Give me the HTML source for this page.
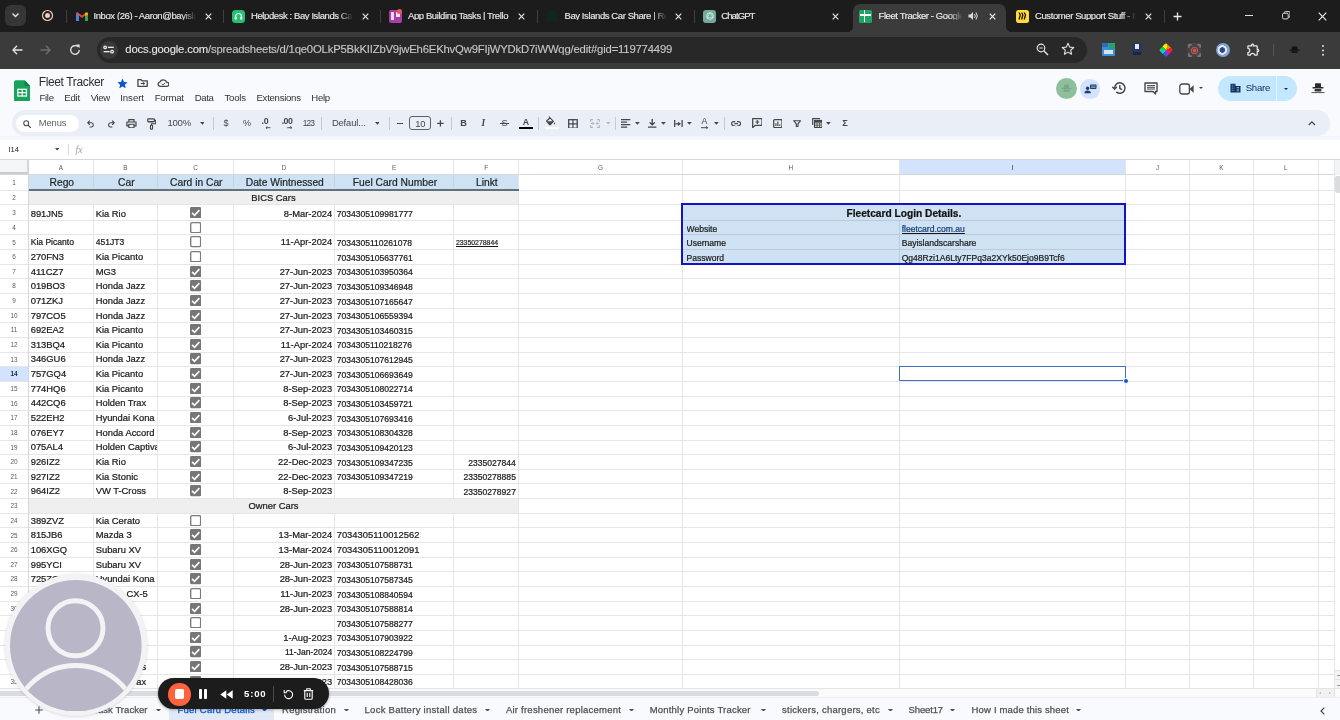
<!DOCTYPE html>
<html><head><meta charset="utf-8"><title>Fleet Tracker - Google Sheets</title>
<style>
*{box-sizing:border-box;margin:0;padding:0}
html,body{width:1340px;height:720px;overflow:hidden;background:#fff;font-family:"Liberation Sans",sans-serif;}
.abs{position:absolute}
#root{position:relative;width:1340px;height:720px;overflow:hidden;background:#fff;transform:translateZ(0);will-change:transform}
.t{position:absolute;white-space:nowrap;line-height:1}
.cell{position:absolute;white-space:nowrap;overflow:hidden;color:#1a1a1a;font-size:9.4px;line-height:1;-webkit-text-stroke:0.22px #1a1a1a}
.vl{position:absolute;width:1px;background:#e6e6e6}
.hl{position:absolute;height:1px;background:#e6e6e6}
.rn{position:absolute;left:0;width:28px;text-align:center;font-size:6.4px;color:#575b5f;line-height:1}
.ch{position:absolute;text-align:center;font-size:6.4px;color:#575b5f;line-height:1;top:165px}
.tab{position:absolute;top:0;height:32px;color:#e3e3e3;font-size:9.6px;letter-spacing:-0.15px}
.mi{position:absolute;top:93.2px;font-size:9.6px;color:#303336;line-height:1;white-space:nowrap}
.st{position:absolute;top:705.2px;font-size:9.5px;color:#4d5156;line-height:1;white-space:nowrap;-webkit-text-stroke:0.25px currentColor}
.sta{position:absolute;top:708.3px;width:0;height:0;border-left:2.6px solid transparent;border-right:2.6px solid transparent;border-top:3px solid #444746}
</style></head><body><div id="root">

<div class="abs" style="left:0;top:0;width:1340px;height:32px;background:#1c1c1c"></div>
<div class="abs" style="left:0;top:32px;width:1340px;height:37px;background:#3b3b3b"></div>
<div class="abs" style="left:853px;top:4px;width:153px;height:28px;background:#3b3b3b;border-radius:7px 7px 0 0"></div>
<div class="abs" style="left:847px;top:26px;width:6px;height:6px;background:radial-gradient(circle at 0 0,#1c1c1c 6px,#3b3b3b 6.5px)"></div>
<div class="abs" style="left:1006px;top:26px;width:6px;height:6px;background:radial-gradient(circle at 100% 0,#1c1c1c 6px,#3b3b3b 6.5px)"></div>
<div class="abs" style="left:5px;top:5px;width:21px;height:21px;border-radius:6px;background:#363636"></div>
<svg class="abs" style="left:11px;top:12px" width="9" height="7" viewBox="0 0 9 7"><path d="M1.5 1.5 L4.5 4.5 L7.5 1.5" fill="none" stroke="#e3e3e3" stroke-width="1.4"/></svg>
<svg class="abs" style="left:41px;top:9px" width="13" height="13" viewBox="0 0 13 13"><circle cx="6.5" cy="6.5" r="5" fill="none" stroke="#f2c9c2" stroke-width="1.2"/><circle cx="6.5" cy="6.5" r="2.5" fill="#f2c9c2"/></svg>
<div class="abs" style="left:65.5px;top:9.5px;width:1.6px;height:13px;background:#414141"></div>
<svg class="abs" style="left:75.5px;top:11.8px" width="12" height="9" viewBox="0 0 13 10"><path d="M0 1 L0 10 L3 10 L3 4 L6.5 6.7 L10 4 L10 10 L13 10 L13 1 L11.8 0 L6.5 4 L1.2 0 Z" fill="#ea4335"/><path d="M0 1 L0 10 L3 10 L3 3.3 Z" fill="#4285f4"/><path d="M13 1 L13 10 L10 10 L10 3.3 Z" fill="#34a853"/><path d="M10 0.9 L13 0.9 L13 3 L10 4.5Z" fill="#fbbc04"/></svg>
<div class="t" style="left:93.5px;top:10.7px;width:102px;overflow:hidden;font-size:9.5px;color:#e8e8e8;letter-spacing:-0.410px;-webkit-text-stroke:0.15px #e8e8e8;-webkit-mask-image:linear-gradient(90deg,#000 88px,transparent 102px)">Inbox (26) - Aaron@bayislandscarshare</div>
<svg class="abs" style="left:205.0px;top:12.5px" width="7" height="7" viewBox="0 0 7 7"><path d="M0.7 0.7 L6.3 6.3 M6.3 0.7 L0.7 6.3" stroke="#e3e3e3" stroke-width="1.2" fill="none"/></svg>
<div class="abs" style="left:222.5px;top:9.5px;width:1.6px;height:13px;background:#414141"></div>
<div class="abs" style="left:232px;top:9.5px;width:13px;height:13px;border-radius:3.5px;background:#25c16f"></div>
<svg class="abs" style="left:234px;top:11.5px" width="9" height="9" viewBox="0 0 9 9"><path d="M1.5 6 V4.5 A3 3 0 0 1 7.5 4.5 V6" fill="none" stroke="#fff" stroke-width="1.2"/><rect x="0.8" y="4.8" width="2" height="2.8" rx="0.6" fill="#fff"/><rect x="6.2" y="4.8" width="2" height="2.8" rx="0.6" fill="#fff"/></svg>
<div class="t" style="left:251px;top:10.7px;width:102px;overflow:hidden;font-size:9.5px;color:#e8e8e8;letter-spacing:-0.410px;-webkit-text-stroke:0.15px #e8e8e8;-webkit-mask-image:linear-gradient(90deg,#000 88px,transparent 102px)">Helpdesk : Bay Islands Car Share</div>
<svg class="abs" style="left:361.5px;top:12.5px" width="7" height="7" viewBox="0 0 7 7"><path d="M0.7 0.7 L6.3 6.3 M6.3 0.7 L0.7 6.3" stroke="#e3e3e3" stroke-width="1.2" fill="none"/></svg>
<div class="abs" style="left:379.5px;top:9.5px;width:1.6px;height:13px;background:#414141"></div>
<div class="abs" style="left:389px;top:9.5px;width:13px;height:13px;border-radius:2px;background:#a83ea8"></div>
<div class="abs" style="left:391px;top:11.5px;width:3px;height:8px;background:#f3d9f3;border-radius:0.5px"></div>
<div class="abs" style="left:395.5px;top:11.5px;width:4px;height:5.5px;background:#f3d9f3;border-radius:0.5px"></div>
<div class="abs" style="left:396.5px;top:9px;width:5px;height:5px;border-radius:50%;background:#ee5a4a"></div>
<div class="t" style="left:408px;top:10.7px;width:116px;overflow:hidden;font-size:9.5px;color:#e8e8e8;letter-spacing:-0.410px;-webkit-text-stroke:0.15px #e8e8e8;-webkit-mask-image:linear-gradient(90deg,#000 102px,transparent 116px)">App Building Tasks | Trello</div>
<svg class="abs" style="left:518.0px;top:12.5px" width="7" height="7" viewBox="0 0 7 7"><path d="M0.7 0.7 L6.3 6.3 M6.3 0.7 L0.7 6.3" stroke="#e3e3e3" stroke-width="1.2" fill="none"/></svg>
<div class="abs" style="left:536.5px;top:9.5px;width:1.6px;height:13px;background:#414141"></div>
<svg class="abs" style="left:546px;top:10px" width="12" height="12" viewBox="0 0 12 12"><rect x="0" y="3" width="12" height="8" rx="1.5" fill="#14241f"/><rect x="2" y="0.5" width="8" height="4" rx="1" fill="#14241f"/></svg>
<div class="t" style="left:564.5px;top:10.7px;width:102px;overflow:hidden;font-size:9.5px;color:#e8e8e8;letter-spacing:-0.410px;-webkit-text-stroke:0.15px #e8e8e8;-webkit-mask-image:linear-gradient(90deg,#000 88px,transparent 102px)">Bay Islands Car Share | Rental</div>
<svg class="abs" style="left:675.0px;top:12.5px" width="7" height="7" viewBox="0 0 7 7"><path d="M0.7 0.7 L6.3 6.3 M6.3 0.7 L0.7 6.3" stroke="#e3e3e3" stroke-width="1.2" fill="none"/></svg>
<div class="abs" style="left:693.5px;top:9.5px;width:1.6px;height:13px;background:#414141"></div>
<div class="abs" style="left:703px;top:9.5px;width:13px;height:13px;border-radius:3px;background:#74aa9c"></div>
<svg class="abs" style="left:704.5px;top:11px" width="10" height="10" viewBox="0 0 10 10"><circle cx="5" cy="5" r="3.3" fill="none" stroke="#d5ebe5" stroke-width="1"/><path d="M5 1.7 L7.8 6.6 L2.2 6.6 Z" fill="none" stroke="#d5ebe5" stroke-width="0.7"/></svg>
<div class="t" style="left:721.2px;top:10.7px;width:102px;overflow:hidden;font-size:9.5px;color:#e8e8e8;letter-spacing:-0.899px;-webkit-text-stroke:0.15px #e8e8e8;-webkit-mask-image:linear-gradient(90deg,#000 88px,transparent 102px)">ChatGPT</div>
<svg class="abs" style="left:832.0px;top:12.5px" width="7" height="7" viewBox="0 0 7 7"><path d="M0.7 0.7 L6.3 6.3 M6.3 0.7 L0.7 6.3" stroke="#e3e3e3" stroke-width="1.2" fill="none"/></svg>
<div class="abs" style="left:859px;top:9.5px;width:13px;height:13px;border-radius:1.5px;background:#1fa463"></div>
<div class="abs" style="left:863.5px;top:10px;width:1.6px;height:12px;background:#fff"></div>
<div class="abs" style="left:860px;top:14px;width:11px;height:1.6px;background:#fff"></div>
<div class="t" style="left:878.5px;top:10.7px;width:84px;overflow:hidden;font-size:9.5px;color:#ececec;letter-spacing:-0.410px;-webkit-text-stroke:0.15px #ececec;-webkit-mask-image:linear-gradient(90deg,#000 70px,transparent 84px)">Fleet Tracker - Google Sheets</div>
<svg class="abs" style="left:968px;top:11px" width="11" height="10" viewBox="0 0 11 10"><path d="M0.5 3.5 H2.5 L5 1 V9 L2.5 6.5 H0.5 Z" fill="#dcdcdc"/><path d="M6.5 3 Q8 5 6.5 7 M8 1.5 Q10.6 5 8 8.5" fill="none" stroke="#dcdcdc" stroke-width="1"/></svg>
<svg class="abs" style="left:988.5px;top:12.5px" width="7" height="7" viewBox="0 0 7 7"><path d="M0.7 0.7 L6.3 6.3 M6.3 0.7 L0.7 6.3" stroke="#f0f0f0" stroke-width="1.2" fill="none"/></svg>
<div class="abs" style="left:1016px;top:9.5px;width:13px;height:13px;border-radius:2.5px;background:#ffdd33"></div>
<svg class="abs" style="left:1018px;top:12px" width="9" height="8" viewBox="0 0 9 8"><path d="M1 0.5 L2.3 3 L1 7.5 M3.6 0.5 L4.9 3 L3.6 7.5 M6.2 0.5 L7.5 3 L6.2 7.5" fill="none" stroke="#111" stroke-width="1.3"/></svg>
<div class="t" style="left:1035px;top:10.7px;width:101px;overflow:hidden;font-size:9.5px;color:#e8e8e8;letter-spacing:-0.410px;-webkit-text-stroke:0.15px #e8e8e8;-webkit-mask-image:linear-gradient(90deg,#000 87px,transparent 101px)">Customer Support Stuff - Miro</div>
<svg class="abs" style="left:1145.0px;top:12.5px" width="7" height="7" viewBox="0 0 7 7"><path d="M0.7 0.7 L6.3 6.3 M6.3 0.7 L0.7 6.3" stroke="#e3e3e3" stroke-width="1.2" fill="none"/></svg>
<div class="abs" style="left:1163.5px;top:9.5px;width:1.6px;height:13px;background:#414141"></div>
<svg class="abs" style="left:1172.5px;top:11.5px" width="9" height="9" viewBox="0 0 9 9"><path d="M4.5 0.5 V8.5 M0.5 4.5 H8.5" stroke="#e8e8e8" stroke-width="1.3"/></svg>
<div class="abs" style="left:1245px;top:15px;width:8px;height:1px;background:#e0e0e0"></div>
<svg class="abs" style="left:1281.8px;top:11.2px" width="8.6" height="8.6" viewBox="0 0 10 10"><rect x="0.6" y="2.6" width="6.6" height="6.6" rx="1.4" fill="none" stroke="#e0e0e0" stroke-width="1.1"/><path d="M2.8 2.6 V1.8 Q2.8 0.7 3.9 0.7 H8.2 Q9.3 0.7 9.3 1.8 V6.1 Q9.3 7.2 8.2 7.2 H7.2" fill="none" stroke="#e0e0e0" stroke-width="1.1"/></svg>
<svg class="abs" style="left:1318px;top:11.5px" width="9" height="9" viewBox="0 0 9 9"><path d="M0.7 0.7 L8.3 8.3 M8.3 0.7 L0.7 8.3" stroke="#f0f0f0" stroke-width="1.1"/></svg>
<svg class="abs" style="left:12px;top:45px" width="11" height="10" viewBox="0 0 11 10"><path d="M5 0.8 L1 5 L5 9.2 M1 5 H10.5" fill="none" stroke="#e3e3e3" stroke-width="1.3"/></svg>
<svg class="abs" style="left:40px;top:45px" width="11" height="10" viewBox="0 0 11 10"><path d="M6 0.8 L10 5 L6 9.2 M10 5 H0.5" fill="none" stroke="#6f6f6f" stroke-width="1.3"/></svg>
<svg class="abs" style="left:69px;top:44px" width="12" height="12" viewBox="0 0 12 12"><path d="M10.3 6 A4.3 4.3 0 1 1 8.9 2.8" fill="none" stroke="#e3e3e3" stroke-width="1.3"/><path d="M7 0.6 H10.6 V4.2 Z" fill="#e3e3e3"/></svg>
<div class="abs" style="left:97px;top:37px;width:990px;height:25.7px;border-radius:13px;background:#282828"></div>
<div class="abs" style="left:100px;top:41px;width:18px;height:18px;border-radius:9px;background:#3a3a3a"></div>
<svg class="abs" style="left:103.4px;top:45.4px" width="11.6" height="9" viewBox="0 0 14 10"><circle cx="2.6" cy="2.4" r="1.6" fill="none" stroke="#ededed" stroke-width="1.5"/><path d="M6 2.4 H13" stroke="#ededed" stroke-width="1.6"/><circle cx="11" cy="7.6" r="1.6" fill="none" stroke="#ededed" stroke-width="1.5"/><path d="M0.8 7.6 H8" stroke="#ededed" stroke-width="1.6"/></svg>
<div class="t" style="left:125.3px;top:44.1px;font-size:11.3px;color:#c7c7c7;-webkit-text-stroke:0.12px #c7c7c7;letter-spacing:-0.183px"><span style="color:#f1f1f1">docs.google.com</span>/spreadsheets/d/1qe0OLkP5BkKIIZbV9jwEh6EKhvQw9FIjWYDkD7iWWqg/edit#gid=119774499</div>
<svg class="abs" style="left:1036px;top:43px" width="13" height="13" viewBox="0 0 13 13"><circle cx="5" cy="5" r="3.8" fill="none" stroke="#e3e3e3" stroke-width="1.2"/><path d="M7.8 7.8 L12 12" stroke="#e3e3e3" stroke-width="1.4"/><path d="M3.2 5 H6.8" stroke="#e3e3e3" stroke-width="1"/></svg>
<svg class="abs" style="left:1061px;top:42px" width="14" height="14" viewBox="0 0 14 14"><path d="M7 1.3 L8.7 5.1 L12.8 5.5 L9.7 8.2 L10.6 12.3 L7 10.1 L3.4 12.3 L4.3 8.2 L1.2 5.5 L5.3 5.1 Z" fill="none" stroke="#e3e3e3" stroke-width="1.1" stroke-linejoin="round"/></svg>
<div class="abs" style="left:1102px;top:43px;width:13px;height:13px;background:#3d8fd1;border-radius:1px"></div><div class="abs" style="left:1102px;top:43px;width:6px;height:4px;background:#2a6fb5"></div><div class="abs" style="left:1109px;top:43px;width:6px;height:6px;background:#23a36a"></div><div class="abs" style="left:1104px;top:49.5px;width:9px;height:4px;background:#cfe4f5"></div>
<div class="abs" style="left:1132px;top:43px;width:10px;height:9px;background:#26375f;border-radius:1.5px"></div><div class="abs" style="left:1135px;top:44px;width:4px;height:5px;background:#dfe8f5"></div><div class="abs" style="left:1133px;top:52px;width:8px;height:3px;background:#1d2540"></div>
<div class="abs" style="left:1161.4px;top:45px;width:10px;height:10px;transform:rotate(45deg);border-radius:1.5px;background:conic-gradient(from 20deg,#e22 0 14%,#f0c 14% 28%,#26d 28% 42%,#1cc 42% 56%,#2c3 56% 72%,#fe0 72% 86%,#f80 86% 100%)"></div>
<div class="abs" style="left:1187px;top:43px;width:14px;height:14px;border-radius:2px;background:#444"></div><svg class="abs" style="left:1187.5px;top:43.5px" width="13" height="13" viewBox="0 0 14 14"><path d="M1 4 V1 H4 M10 1 H13 V4 M13 10 V13 H10 M4 13 H1 V10" fill="none" stroke="#8a8a8a" stroke-width="1.4"/><circle cx="7" cy="7" r="3.3" fill="none" stroke="#c4574d" stroke-width="1.2"/><circle cx="7" cy="7" r="1.8" fill="#d9564a"/></svg>
<div class="abs" style="left:1216px;top:43px;width:14px;height:14px;border-radius:50%;background:radial-gradient(circle at 45% 50%,#2f4a7a 0 2.5px,#dfe9f7 3px 4.5px,#7fa2d6 5px 7px)"></div>
<svg class="abs" style="left:1245.6px;top:42px" width="15" height="15" viewBox="0 0 24 24"><path d="M10.5 4.500c.280 0 .5.220.5.500v2h6v6h2c.280 0 .5.220.5.500s-.220.500-.5.500h-2v6h-2.120c-.680-1.750-2.390-3-4.380-3s-3.700 1.250-4.380 3H4v-2.120c1.750-.680 3-2.390 3-4.380 0-1.990-1.240-3.700-2.990-4.380L4 7h6V5c0-.280.220-.5.500-.5m0-2C9.120 2.500 8 3.620 8 5H4c-1.100 0-1.990.9-1.990 2v3.800h.290c1.490 0 2.700 1.210 2.700 2.700s-1.210 2.700-2.700 2.700H2V20c0 1.100.9 2 2 2h3.800v-.3c0-1.490 1.210-2.700 2.700-2.700s2.700 1.210 2.700 2.700v.3H17c1.100 0 2-.9 2-2v-4c1.380 0 2.500-1.120 2.500-2.500S20.380 11 19 11V7c0-1.100-.9-2-2-2h-4c0-1.380-1.120-2.500-2.500-2.500z" fill="#eaeaea"/></svg>
<div class="abs" style="left:1272.5px;top:44px;width:1px;height:12px;background:#555"></div>
<svg class="abs" style="left:1289px;top:46px" width="11.2" height="7.6" viewBox="0 0 12 10" preserveAspectRatio="none"><rect x="3" y="0.5" width="6" height="4.5" rx="0.8" fill="#111"/><rect x="0.5" y="4.5" width="11" height="1.6" rx="0.5" fill="#111"/><rect x="2.5" y="6.5" width="7" height="2.6" rx="1" fill="#161616"/></svg>
<div class="abs" style="left:1322px;top:44.5px;width:2px;height:2px;border-radius:50%;background:#e3e3e3;box-shadow:0 4.4px 0 #e3e3e3,0 8.8px 0 #e3e3e3"></div>
<div class="abs" style="left:0;top:69px;width:1340px;height:67px;background:#f8fafd"></div><div class="abs" style="left:0;top:135.8px;width:1340px;height:7.5px;background:linear-gradient(#f1f4fa,#fff)"></div>
<svg class="abs" style="left:13.5px;top:79.5px" width="16.3" height="21.5" viewBox="0 0 17 22"><path d="M2 0 H11 L17 6 V20 Q17 22 15 22 H2 Q0 22 0 20 V2 Q0 0 2 0 Z" fill="#17a35c"/><path d="M11 0 L17 6 H12.5 Q11 6 11 4.5 Z" fill="#0d7f45"/><rect x="4" y="9.5" width="9" height="7" fill="none" stroke="#fff" stroke-width="1.3"/><path d="M4 13 H13 M8.5 9.5 V16.5" stroke="#fff" stroke-width="1.2"/></svg>
<div class="t" style="left:38.7px;top:76px;font-size:12px;color:#2a2d31;letter-spacing:-0.363px">Fleet Tracker</div>
<svg class="abs" style="left:116.5px;top:77.5px" width="11" height="11" viewBox="0 0 11 11"><path d="M5.5 0.6 L7 4 L10.6 4.3 L7.9 6.7 L8.7 10.3 L5.5 8.4 L2.3 10.3 L3.1 6.7 L0.4 4.3 L4 4 Z" fill="#0b57d0"/></svg>
<svg class="abs" style="left:136.8px;top:79.2px" width="11.2" height="8" viewBox="0 0 12 9" preserveAspectRatio="none"><path d="M1 0.8 H4.4 L5.5 2 H11 V8.2 H1 Z" fill="none" stroke="#444746" stroke-width="1.4" stroke-linejoin="round"/><path d="M4 5.1 H8 M6.6 3.7 L8 5.1 L6.6 6.5" fill="none" stroke="#444746" stroke-width="1.1"/></svg>
<svg class="abs" style="left:156.6px;top:79px" width="12.6" height="8.2" viewBox="0 0 14 10" preserveAspectRatio="none"><path d="M3.6 9 A2.8 2.8 0 0 1 3.4 3.5 A3.8 3.8 0 0 1 10.6 3.8 A2.6 2.6 0 0 1 10.6 9 Z" fill="none" stroke="#444746" stroke-width="1.5"/><path d="M5.2 6 L6.6 7.3 L9 4.8" fill="none" stroke="#444746" stroke-width="1.1"/></svg>
<div class="mi" style="left:39.5px;letter-spacing:-0.317px">File</div>
<div class="mi" style="left:64.2px;letter-spacing:-0.186px">Edit</div>
<div class="mi" style="left:90.7px;letter-spacing:-0.409px">View</div>
<div class="mi" style="left:120.2px;letter-spacing:-0.035px">Insert</div>
<div class="mi" style="left:154.7px;letter-spacing:-0.234px">Format</div>
<div class="mi" style="left:194.7px;letter-spacing:-0.370px">Data</div>
<div class="mi" style="left:224.5px;letter-spacing:-0.242px">Tools</div>
<div class="mi" style="left:256.5px;letter-spacing:-0.276px">Extensions</div>
<div class="mi" style="left:311.2px;letter-spacing:-0.236px">Help</div>
<div class="abs" style="left:1056px;top:78px;width:21px;height:21px;border-radius:50%;background:#8dbf9b"></div>
<svg class="abs" style="left:1061px;top:84px" width="11" height="9" viewBox="0 0 11 9"><rect x="3" y="0.5" width="5" height="3.6" rx="0.8" fill="#7aa787"/><rect x="0.8" y="3.8" width="9.4" height="1.3" fill="#7aa787"/><rect x="2.5" y="5.6" width="6" height="2.4" rx="1" fill="#7aa787"/></svg>
<div class="abs" style="left:1080px;top:79px;width:19.5px;height:19.5px;border-radius:50%;background:#d3e3fd"></div>
<svg class="abs" style="left:1084px;top:83.5px" width="13" height="10" viewBox="0 0 13 10"><circle cx="3.6" cy="4.2" r="1.7" fill="#1f3a6e"/><path d="M0.4 9.3 Q0.4 6.6 3.6 6.6 Q6.8 6.6 6.8 9.3 Z" fill="#1f3a6e"/><rect x="6" y="0.5" width="6.5" height="4.4" rx="0.8" fill="#1f3a6e"/><path d="M7 2 H11.5 M7 3.4 H11.5" stroke="#d3e3fd" stroke-width="0.6"/></svg>
<svg class="abs" style="left:1112px;top:81px" width="15" height="14" viewBox="0 0 15 14"><path d="M2.6 7 A5.2 5.2 0 1 1 4.3 10.9" fill="none" stroke="#444746" stroke-width="1.5"/><path d="M0.4 5.8 L2.6 8.2 L4.8 5.8" fill="none" stroke="#444746" stroke-width="1.4"/><path d="M7.8 4 V7.3 L10 8.7" fill="none" stroke="#444746" stroke-width="1.4"/></svg>
<svg class="abs" style="left:1144px;top:82px" width="14" height="13" viewBox="0 0 14 13"><path d="M1 1 H13 V9.5 H11.5 V12 L9 9.5 H1 Z" fill="none" stroke="#444746" stroke-width="1.4" stroke-linejoin="round"/><path d="M3 3.6 H11 M3 5.3 H11 M3 7 H11" stroke="#444746" stroke-width="1"/></svg>
<svg class="abs" style="left:1178.5px;top:82.5px" width="16" height="12" viewBox="0 0 16 12"><rect x="0.8" y="1" width="9.6" height="10" rx="2.2" fill="none" stroke="#444746" stroke-width="1.3"/><path d="M10.4 6 L14.6 2.2 V9.8 Z" fill="#444746"/></svg>
<div class="abs" style="left:1198.5px;top:87px;width:0;height:0;border-left:2.3px solid transparent;border-right:2.3px solid transparent;border-top:2.6px solid #444746"></div>
<div class="abs" style="left:1218px;top:75.5px;width:79px;height:25.5px;border-radius:13px;background:#c2e7ff"></div>
<div class="abs" style="left:1275.5px;top:75.5px;width:1px;height:25.5px;background:#e5f3fd"></div>
<svg class="abs" style="left:1229.5px;top:83px" width="11" height="10" viewBox="0 0 11 10"><path d="M0.5 9.5 V0.8 H5.5 V3 H10.5 V9.5 Z" fill="#10305e"/><path d="M6.7 4.5 H9 M6.7 6.2 H9 M6.7 7.9 H9" stroke="#c2e7ff" stroke-width="0.7"/><path d="M1.8 2.2 H2.8 M1.8 4 H2.8 M1.8 5.8 H2.8 M1.8 7.6 H2.8 M3.6 2.2 H4.4 M3.6 4 H4.4 M3.6 5.8 H4.4 M3.6 7.6 H4.4" stroke="#c2e7ff" stroke-width="0.6"/></svg>
<div class="t" style="left:1245.7px;top:83.3px;font-size:9.6px;color:#0f2a5c;letter-spacing:-0.224px">Share</div>
<div class="abs" style="left:1284.3px;top:87.5px;width:0;height:0;border-left:2.4px solid transparent;border-right:2.4px solid transparent;border-top:2.8px solid #0f2a5c"></div>
<svg class="abs" style="left:1311px;top:83px" width="14" height="11" viewBox="0 0 14 11"><rect x="4" y="0.3" width="6" height="4.2" rx="0.8" fill="#2a2a2a"/><rect x="1.6" y="4" width="10.8" height="1.5" fill="#2a2a2a"/><rect x="3.5" y="6" width="7" height="2.6" rx="1" fill="#333"/><path d="M0.5 9.6 H13.5" stroke="#2a2a2a" stroke-width="0.8"/></svg>
<div class="abs" style="left:11.5px;top:110.4px;width:1318.5px;height:25.4px;border-radius:12.7px;background:#eaeff7"></div>
<div class="abs" style="left:15.8px;top:114.5px;width:63.4px;height:17.2px;border-radius:8.6px;background:#fff"></div>
<svg class="abs" style="left:22.8px;top:119.5px" width="8.20" height="8.30" viewBox="0 0 10 10" preserveAspectRatio="none"><circle cx="3.9" cy="3.9" r="3" fill="none" stroke="#444746" stroke-width="1.3"/><path d="M6.1 6.1 L9.5 9.5" stroke="#444746" stroke-width="1.4"/></svg>
<div class="t" style="left:38.8px;top:118.2px;font-size:9.4px;color:#5e6063;letter-spacing:-0.103px">Menus</div>
<svg class="abs" style="left:86.8px;top:120px" width="7.80" height="7.50" viewBox="0 0 10 9" preserveAspectRatio="none"><path d="M3.6 0.7 L1 3.3 L3.6 5.9 M1 3.3 H6 A2.6 2.6 0 0 1 6 8.4 H3.4" fill="none" stroke="#444746" stroke-width="1.35"/></svg>
<svg class="abs" style="left:106.6px;top:120px" width="8.10" height="7.50" viewBox="0 0 10 9" preserveAspectRatio="none"><path d="M6.4 0.7 L9 3.3 L6.4 5.9 M9 3.3 H4 A2.6 2.6 0 0 0 4 8.4 H6.6" fill="none" stroke="#444746" stroke-width="1.35"/></svg>
<svg class="abs" style="left:126.1px;top:119px" width="10.90" height="9.40" viewBox="0 0 12 11" preserveAspectRatio="none"><path d="M3.2 3.3 V0.8 H8.8 V3.3 M3.2 8 H1 V3.5 H11 V8 H8.8 M3.2 6.2 H8.8 V10.2 H3.2 Z" fill="none" stroke="#444746" stroke-width="1.35"/></svg>
<svg class="abs" style="left:146.7px;top:117.7px" width="9.40" height="11.90" viewBox="0 0 10 12" preserveAspectRatio="none"><rect x="0.8" y="0.8" width="7" height="3" rx="0.7" fill="none" stroke="#444746" stroke-width="1.3"/><path d="M7.8 2.3 H9.2 V5.8 H4.8 V7.4" fill="none" stroke="#444746" stroke-width="1.2"/><rect x="3.7" y="7.3" width="2.2" height="3.9" rx="0.6" fill="none" stroke="#444746" stroke-width="1.2"/></svg>
<div class="t" style="left:167.5px;top:118.2px;font-size:9.6px;color:#444746;letter-spacing:-0.288px;">100%</div>
<svg class="abs" style="left:199.60px;top:122.05px" width="4.8" height="2.7" viewBox="0 0 10 5.6" preserveAspectRatio="none"><path d="M0 0 H10 L5 5.6 Z" fill="#444746"/></svg>
<div class="abs" style="left:212.7px;top:116.7px;width:1px;height:13.5px;background:#c7c9cc"></div>
<div class="t" style="left:223.4px;top:119.2px;font-size:9px;color:#444746;letter-spacing:-0.006px;">$</div>
<div class="t" style="left:242.9px;top:119.2px;font-size:9px;color:#444746;letter-spacing:-0.902px;">%</div>
<div class="t" style="left:261.4px;top:117.3px;font-size:8.8px;color:#444746;letter-spacing:-0.120px;font-weight:bold;">.0</div>
<svg class="abs" style="left:265.3px;top:125.6px" width="5.70" height="3.40" viewBox="0 0 6 4" preserveAspectRatio="none"><path d="M5.8 2 H1 M2.6 0.4 L1 2 L2.6 3.6" fill="none" stroke="#444746" stroke-width="1"/></svg>
<div class="t" style="left:281.7px;top:117.3px;font-size:8.8px;color:#444746;letter-spacing:-0.511px;font-weight:bold;">.00</div>
<svg class="abs" style="left:287.2px;top:125.6px" width="5.80" height="3.40" viewBox="0 0 6 4" preserveAspectRatio="none"><path d="M0.2 2 H5 M3.4 0.4 L5 2 L3.4 3.6" fill="none" stroke="#444746" stroke-width="1"/></svg>
<div class="t" style="left:302.8px;top:119px;font-size:8.4px;color:#444746;letter-spacing:-0.872px;">123</div>
<div class="abs" style="left:321.3px;top:116.7px;width:1px;height:13.5px;background:#c7c9cc"></div>
<div class="t" style="left:331.9px;top:118.3px;font-size:9.4px;color:#444746;letter-spacing:-0.134px;">Defaul...</div>
<svg class="abs" style="left:374.70px;top:122.05px" width="4.8" height="2.7" viewBox="0 0 10 5.6" preserveAspectRatio="none"><path d="M0 0 H10 L5 5.6 Z" fill="#444746"/></svg>
<div class="abs" style="left:388.5px;top:116.7px;width:1px;height:13.5px;background:#c7c9cc"></div>
<div class="abs" style="left:396.9px;top:122.7px;width:5.8px;height:1.3px;background:#444746"></div>
<div class="abs" style="left:409.3px;top:115.9px;width:21.8px;height:14.6px;border:1px solid #5f6368;border-radius:3px"></div>
<div class="t" style="left:409.3px;width:21.8px;text-align:center;top:118.9px;font-size:9.4px;color:#444746;letter-spacing:-0.2px">10</div>
<svg class="abs" style="left:436.8px;top:120px" width="6.80" height="6.80" viewBox="0 0 7 7" preserveAspectRatio="none"><path d="M3.5 0.2 V6.8 M0.2 3.5 H6.8" stroke="#444746" stroke-width="1.3"/></svg>
<div class="abs" style="left:450.7px;top:116.7px;width:1px;height:13.5px;background:#c7c9cc"></div>
<div class="t" style="left:460.2px;top:119px;font-size:9.2px;color:#444746;letter-spacing:-0.444px;font-weight:bold;">B</div>
<div class="t" style="left:481.6px;top:119px;font-size:9.4px;color:#444746;font-style:italic;font-weight:bold;font-family:'Liberation Serif',serif">I</div>
<div class="t" style="left:501.4px;top:119px;font-size:9.2px;color:#444746">S</div>
<div class="abs" style="left:499.7px;top:123px;width:9.3px;height:1.2px;background:#444746"></div>
<div class="t" style="left:522.8px;top:117.6px;font-size:8.8px;color:#444746;letter-spacing:-0.355px;font-weight:bold;">A</div>
<div class="abs" style="left:518.7px;top:126.5px;width:14.5px;height:2.1px;background:#000"></div>
<div class="abs" style="left:537.8px;top:116.7px;width:1px;height:13.5px;background:#c7c9cc"></div>
<svg class="abs" style="left:546.4px;top:116.2px" width="9.80" height="9.40" viewBox="0 0 11 10" preserveAspectRatio="none"><path d="M3.2 0.6 L8.3 5.7 L5 9 Q4.5 9.4 4 9 L1 6 Q0.6 5.5 1 5 L4.6 1.9" fill="none" stroke="#444746" stroke-width="1.3" stroke-linejoin="round"/><path d="M1.2 5.6 H8.2 L5 8.9 Q4.5 9.3 4 8.9 Z" fill="#444746"/><path d="M9.6 6.3 Q11 8.3 9.6 9.2 Q8.2 8.3 9.6 6.3Z" fill="#444746"/></svg>
<div class="abs" style="left:544.6px;top:126.5px;width:14px;height:2.3px;background:#fff"></div>
<svg class="abs" style="left:568.2px;top:118.5px" width="9.90" height="9.90" viewBox="0 0 10 10" preserveAspectRatio="none"><rect x="0.7" y="0.7" width="8.6" height="8.6" fill="none" stroke="#444746" stroke-width="1.3"/><path d="M5 0.7 V9.3 M0.7 5 H9.3" stroke="#444746" stroke-width="1.2"/></svg>
<svg class="abs" style="left:589.8px;top:119px" width="9.90" height="9.00" viewBox="0 0 10 9" preserveAspectRatio="none"><path d="M3 0.6 H0.6 V3 M7 0.6 H9.4 V3 M0.6 6 V8.4 H3 M9.4 6 V8.4 H7 M0.6 4.5 H3.6 M2.4 3.3 L3.7 4.5 L2.4 5.7 M9.4 4.5 H6.4 M7.6 3.3 L6.3 4.5 L7.6 5.7" fill="none" stroke="#b3b7bc" stroke-width="1.1"/></svg>
<svg class="abs" style="left:605.80px;top:122.25px" width="4.4" height="2.5" viewBox="0 0 10 5.6" preserveAspectRatio="none"><path d="M0 0 H10 L5 5.6 Z" fill="#b3b7bc"/></svg>
<div class="abs" style="left:614.7px;top:116.7px;width:1px;height:13.5px;background:#c7c9cc"></div>
<svg class="abs" style="left:621.3px;top:119px" width="9.30" height="8.90" viewBox="0 0 10 9" preserveAspectRatio="none"><path d="M0 0.7 H10 M0 3.23 H6.6 M0 5.77 H10 M0 8.3 H6.6" stroke="#444746" stroke-width="1.3"/></svg>
<svg class="abs" style="left:635.20px;top:122.15px" width="4.8" height="2.7" viewBox="0 0 10 5.6" preserveAspectRatio="none"><path d="M0 0 H10 L5 5.6 Z" fill="#444746"/></svg>
<svg class="abs" style="left:648.2px;top:119px" width="8.40" height="8.90" viewBox="0 0 8 9" preserveAspectRatio="none"><path d="M4 0 V5.6 M1.5 3.4 L4 5.9 L6.5 3.4 M0 8.3 H8" fill="none" stroke="#444746" stroke-width="1.3"/></svg>
<svg class="abs" style="left:661.40px;top:122.15px" width="4.8" height="2.7" viewBox="0 0 10 5.6" preserveAspectRatio="none"><path d="M0 0 H10 L5 5.6 Z" fill="#444746"/></svg>
<svg class="abs" style="left:674px;top:119.6px" width="8.80" height="7.70" viewBox="0 0 9 8" preserveAspectRatio="none"><path d="M0.7 0 V8 M8.3 0 V8 M1.6 4 H5" fill="none" stroke="#444746" stroke-width="1.3"/><path d="M4 1.7 L7.2 4 L4 6.3 Z" fill="#444746"/></svg>
<svg class="abs" style="left:687.20px;top:122.15px" width="4.8" height="2.7" viewBox="0 0 10 5.6" preserveAspectRatio="none"><path d="M0 0 H10 L5 5.6 Z" fill="#444746"/></svg>
<div class="t" style="left:701.6px;top:117.4px;font-size:8.8px;color:#444746;letter-spacing:0.130px;">A</div>
<svg class="abs" style="left:701.4px;top:125.8px" width="8.00" height="3.40" viewBox="0 0 8 3.4" preserveAspectRatio="none"><path d="M0 1.7 H6.6 M5.2 0.3 L6.8 1.7 L5.2 3.1" fill="none" stroke="#444746" stroke-width="1"/></svg>
<svg class="abs" style="left:713.80px;top:122.15px" width="4.8" height="2.7" viewBox="0 0 10 5.6" preserveAspectRatio="none"><path d="M0 0 H10 L5 5.6 Z" fill="#444746"/></svg>
<div class="abs" style="left:723.6px;top:116.7px;width:1px;height:13.5px;background:#c7c9cc"></div>
<svg class="abs" style="left:731.3px;top:120.9px" width="10.20" height="5.40" viewBox="0 0 11 6" preserveAspectRatio="none"><path d="M4.6 0.75 H3 A2.25 2.25 0 0 0 3 5.25 H4.6 M6.4 0.75 H8 A2.25 2.25 0 0 1 8 5.25 H6.4 M3.6 3 H7.4" fill="none" stroke="#444746" stroke-width="1.3"/></svg>
<svg class="abs" style="left:751.6px;top:118.2px" width="10.70" height="10.10" viewBox="0 0 11 10.5" preserveAspectRatio="none"><path d="M0.7 0.7 H10.3 V7.8 H3.2 L0.7 9.9 Z" fill="none" stroke="#444746" stroke-width="1.3" stroke-linejoin="round"/><path d="M5.5 2.2 V6.2 M3.5 4.2 H7.5" stroke="#444746" stroke-width="1.2"/></svg>
<svg class="abs" style="left:772.6px;top:118.6px" width="9.70" height="9.30" viewBox="0 0 10 10" preserveAspectRatio="none"><rect x="0.7" y="0.7" width="8.6" height="8.6" rx="1.1" fill="none" stroke="#444746" stroke-width="1.3"/><path d="M3 7.4 V4.6 M5 7.4 V2.8 M7 7.4 V5.8" stroke="#444746" stroke-width="1.2"/></svg>
<svg class="abs" style="left:793.4px;top:120.1px" width="8.30" height="7.20" viewBox="0 0 9 8" preserveAspectRatio="none"><path d="M0.8 0.8 H8.2 L5.4 4.2 V7.2 H3.6 V4.2 Z" fill="none" stroke="#444746" stroke-width="1.3" stroke-linejoin="round"/></svg>
<svg class="abs" style="left:811.8px;top:118.2px" width="10.70" height="10.10" viewBox="0 0 11 10.5" preserveAspectRatio="none"><path d="M0.7 7.4 V0.7 H8.3" fill="none" stroke="#444746" stroke-width="1.2"/><rect x="2.6" y="2.6" width="7.8" height="7.2" fill="none" stroke="#444746" stroke-width="1.2"/><path d="M2.6 5 H10.4 M2.6 7.4 H10.4 M5.2 5 V9.8 M7.8 5 V9.8" stroke="#444746" stroke-width="0.9"/><path d="M2.6 3.6 H10.4" stroke="#444746" stroke-width="1.6"/></svg>
<svg class="abs" style="left:826.40px;top:122.15px" width="4.8" height="2.7" viewBox="0 0 10 5.6" preserveAspectRatio="none"><path d="M0 0 H10 L5 5.6 Z" fill="#444746"/></svg>
<div class="t" style="left:842.2px;top:119.4px;font-size:9.2px;color:#444746;letter-spacing:0.579px;font-weight:bold;">Σ</div>
<svg class="abs" style="left:1307.8px;top:121.3px" width="7.80" height="4.70" viewBox="0 0 8 5" preserveAspectRatio="none"><path d="M0.8 4.3 L4 1 L7.2 4.3" fill="none" stroke="#444746" stroke-width="1.3"/></svg>
<div class="abs" style="left:0;top:139.5px;width:1340px;height:20px;background:#fff"></div>
<div class="t" style="left:8.5px;top:145.5px;font-size:7.6px;color:#222">I14</div>
<svg class="abs" style="left:54.80px;top:148.35px" width="4.4" height="2.5" viewBox="0 0 10 5.6" preserveAspectRatio="none"><path d="M0 0 H10 L5 5.6 Z" fill="#444746"/></svg>
<div class="abs" style="left:67.5px;top:144px;width:1px;height:11px;background:#d8dadd"></div>
<div class="t" style="left:75.5px;top:145.6px;font-size:9.5px;color:#9aa0a6;font-style:italic;font-family:'Liberation Serif',serif">fx</div>
<div class="abs" style="left:0;top:159px;width:1340px;height:1px;background:#d5d8dc"></div>
<div class="abs" style="left:0;top:160px;width:1334.5px;height:14.5px;background:#fff"></div>
<div class="abs" style="left:0;top:160px;width:28px;height:12px;background:#f5f6f7"></div>
<div class="abs" style="left:0;top:172px;width:28.5px;height:2.6px;background:#c9cbcd"></div>
<div class="abs" style="left:26.5px;top:160px;width:2px;height:14px;background:#d2d4d6"></div>
<div class="abs" style="left:899.2px;top:160px;width:226.29999999999995px;height:14.5px;background:#d3e3fd"></div>
<div class="abs" style="left:0;top:366.75px;width:28.5px;height:14.65px;background:#d3e3fd"></div>
<div class="abs" style="left:28.5px;top:174.7px;width:490.0px;height:15.300000000000011px;background:#cfe2f3"></div>
<div class="abs" style="left:28.5px;top:190.0px;width:490.0px;height:14.599999999999994px;background:#efefef"></div>
<div class="abs" style="left:28.5px;top:498.6px;width:490.0px;height:14.65px;background:#efefef"></div>
<div class="abs" style="left:682.3px;top:204.6px;width:443.20000000000005px;height:59.599999999999994px;background:#cfe2f3"></div>
<div class="hl" style="left:0;top:174.20px;width:1334.5px"></div>
<div class="hl" style="left:0;top:189.50px;width:1334.5px"></div>
<div class="hl" style="left:0;top:204.10px;width:1334.5px"></div>
<div class="hl" style="left:0;top:219.80px;width:1334.5px"></div>
<div class="hl" style="left:0;top:234.40px;width:1334.5px"></div>
<div class="hl" style="left:0;top:249.10px;width:1334.5px"></div>
<div class="hl" style="left:0;top:263.70px;width:1334.5px"></div>
<div class="hl" style="left:0;top:278.35px;width:1334.5px"></div>
<div class="hl" style="left:0;top:293.00px;width:1334.5px"></div>
<div class="hl" style="left:0;top:307.65px;width:1334.5px"></div>
<div class="hl" style="left:0;top:322.30px;width:1334.5px"></div>
<div class="hl" style="left:0;top:336.95px;width:1334.5px"></div>
<div class="hl" style="left:0;top:351.60px;width:1334.5px"></div>
<div class="hl" style="left:0;top:366.25px;width:1334.5px"></div>
<div class="hl" style="left:0;top:380.90px;width:1334.5px"></div>
<div class="hl" style="left:0;top:395.55px;width:1334.5px"></div>
<div class="hl" style="left:0;top:410.20px;width:1334.5px"></div>
<div class="hl" style="left:0;top:424.85px;width:1334.5px"></div>
<div class="hl" style="left:0;top:439.50px;width:1334.5px"></div>
<div class="hl" style="left:0;top:454.15px;width:1334.5px"></div>
<div class="hl" style="left:0;top:468.80px;width:1334.5px"></div>
<div class="hl" style="left:0;top:483.45px;width:1334.5px"></div>
<div class="hl" style="left:0;top:498.10px;width:1334.5px"></div>
<div class="hl" style="left:0;top:512.75px;width:1334.5px"></div>
<div class="hl" style="left:0;top:527.40px;width:1334.5px"></div>
<div class="hl" style="left:0;top:542.05px;width:1334.5px"></div>
<div class="hl" style="left:0;top:556.70px;width:1334.5px"></div>
<div class="hl" style="left:0;top:571.35px;width:1334.5px"></div>
<div class="hl" style="left:0;top:586.00px;width:1334.5px"></div>
<div class="hl" style="left:0;top:600.65px;width:1334.5px"></div>
<div class="hl" style="left:0;top:615.30px;width:1334.5px"></div>
<div class="hl" style="left:0;top:629.95px;width:1334.5px"></div>
<div class="hl" style="left:0;top:644.60px;width:1334.5px"></div>
<div class="hl" style="left:0;top:659.25px;width:1334.5px"></div>
<div class="hl" style="left:0;top:673.90px;width:1334.5px"></div>
<div class="vl" style="left:93.00px;top:160px;height:528.3px"></div>
<div class="vl" style="left:157.00px;top:160px;height:528.3px"></div>
<div class="vl" style="left:233.00px;top:160px;height:528.3px"></div>
<div class="vl" style="left:334.00px;top:160px;height:528.3px"></div>
<div class="vl" style="left:453.20px;top:160px;height:528.3px"></div>
<div class="vl" style="left:518.00px;top:160px;height:528.3px"></div>
<div class="vl" style="left:681.80px;top:160px;height:528.3px"></div>
<div class="vl" style="left:898.70px;top:160px;height:528.3px"></div>
<div class="vl" style="left:1125.00px;top:160px;height:528.3px"></div>
<div class="vl" style="left:1189.00px;top:160px;height:528.3px"></div>
<div class="vl" style="left:1253.00px;top:160px;height:528.3px"></div>
<div class="vl" style="left:1317.50px;top:160px;height:528.3px"></div>
<div class="vl" style="left:1334.00px;top:160px;height:528.3px"></div>
<div class="vl" style="left:28px;top:160px;height:528.3px;background:#d5d7d9"></div>
<div class="hl" style="left:0;top:174.2px;width:1334.5px;background:#d5d7d9"></div>
<div class="abs" style="left:29.0px;top:190.5px;width:489.0px;height:13.599999999999994px;background:#efefef"></div>
<div class="abs" style="left:29.0px;top:499.1px;width:489.0px;height:13.649999999999977px;background:#efefef"></div>
<div class="abs" style="left:28.5px;top:188.9px;width:490.0px;height:1.8px;background:#63717d"></div>
<div class="vl" style="left:93.00px;top:174.7px;height:13.50000000000001px;background:#c3d3e3"></div>
<div class="vl" style="left:157.00px;top:174.7px;height:13.50000000000001px;background:#c3d3e3"></div>
<div class="vl" style="left:233.00px;top:174.7px;height:13.50000000000001px;background:#c3d3e3"></div>
<div class="vl" style="left:334.00px;top:174.7px;height:13.50000000000001px;background:#c3d3e3"></div>
<div class="vl" style="left:453.20px;top:174.7px;height:13.50000000000001px;background:#c3d3e3"></div>
<div class="abs" style="left:683.3px;top:205.6px;width:441.20000000000005px;height:14.200000000000017px;background:#cfe2f3"></div>
<div class="hl" style="left:682.3px;top:219.8px;width:443.20000000000005px;background:#bccbdb"></div>
<div class="hl" style="left:682.3px;top:234.4px;width:443.20000000000005px;background:#bccbdb"></div>
<div class="hl" style="left:682.3px;top:249.1px;width:443.20000000000005px;background:#bccbdb"></div>
<div class="vl" style="left:898.7px;top:220.3px;height:43.89999999999998px;background:#bccbdb"></div>
<div class="abs" style="left:681.0999999999999px;top:203.2px;width:445.00000000000006px;height:61.8px;border:2px solid #1414c4"></div>
<div class="ch" style="left:28.5px;width:65.0px">A</div>
<div class="ch" style="left:93.5px;width:64.0px">B</div>
<div class="ch" style="left:157.5px;width:76.0px">C</div>
<div class="ch" style="left:233.5px;width:101.0px">D</div>
<div class="ch" style="left:334.5px;width:119.19999999999999px">E</div>
<div class="ch" style="left:453.7px;width:64.80000000000001px">F</div>
<div class="ch" style="left:518.5px;width:163.79999999999995px">G</div>
<div class="ch" style="left:682.3px;width:216.9000000000001px">H</div>
<div class="ch" style="left:899.2px;width:226.29999999999995px;color:#1f1f1f">I</div>
<div class="ch" style="left:1125.5px;width:64.0px">J</div>
<div class="ch" style="left:1189.5px;width:64.0px">K</div>
<div class="ch" style="left:1253.5px;width:64.5px">L</div>
<div class="rn" style="top:179.65px;">1</div>
<div class="rn" style="top:194.60px;">2</div>
<div class="rn" style="top:209.75px;">3</div>
<div class="rn" style="top:224.90px;">4</div>
<div class="rn" style="top:239.55px;">5</div>
<div class="rn" style="top:254.20px;">6</div>
<div class="rn" style="top:268.82px;">7</div>
<div class="rn" style="top:283.47px;">8</div>
<div class="rn" style="top:298.12px;">9</div>
<div class="rn" style="top:312.78px;">10</div>
<div class="rn" style="top:327.43px;">11</div>
<div class="rn" style="top:342.07px;">12</div>
<div class="rn" style="top:356.73px;">13</div>
<div class="rn" style="top:371.38px;font-weight:bold;color:#0b2a66;">14</div>
<div class="rn" style="top:386.02px;">15</div>
<div class="rn" style="top:400.68px;">16</div>
<div class="rn" style="top:415.32px;">17</div>
<div class="rn" style="top:429.98px;">18</div>
<div class="rn" style="top:444.62px;">19</div>
<div class="rn" style="top:459.27px;">20</div>
<div class="rn" style="top:473.93px;">21</div>
<div class="rn" style="top:488.57px;">22</div>
<div class="rn" style="top:503.23px;">23</div>
<div class="rn" style="top:517.88px;">24</div>
<div class="rn" style="top:532.52px;">25</div>
<div class="rn" style="top:547.17px;">26</div>
<div class="rn" style="top:561.83px;">27</div>
<div class="rn" style="top:576.47px;">28</div>
<div class="rn" style="top:591.12px;">29</div>
<div class="rn" style="top:605.77px;">30</div>
<div class="rn" style="top:620.42px;">31</div>
<div class="rn" style="top:635.08px;">32</div>
<div class="rn" style="top:649.72px;">33</div>
<div class="rn" style="top:664.38px;">34</div>
<div class="rn" style="top:679.02px;">35</div>
<div class="cell" style="left:29.3px;width:65.0px;top:178.1px;height:13px;text-align:center;font-size:10.25px;color:#1f2a33">Rego</div>
<div class="cell" style="left:94.3px;width:64.0px;top:178.1px;height:13px;text-align:center;font-size:10.25px;color:#1f2a33">Car</div>
<div class="cell" style="left:158.3px;width:76.0px;top:178.1px;height:13px;text-align:center;font-size:10.25px;color:#1f2a33">Card in Car</div>
<div class="cell" style="left:234.3px;width:101.0px;top:178.1px;height:13px;text-align:center;font-size:10.25px;color:#1f2a33">Date Wintnessed</div>
<div class="cell" style="left:335.3px;width:119.19999999999999px;top:178.1px;height:13px;text-align:center;font-size:10.25px;color:#1f2a33">Fuel Card Number</div>
<div class="cell" style="left:454.5px;width:64.80000000000001px;top:178.1px;height:13px;text-align:center;font-size:10.25px;color:#1f2a33">Linkt</div>
<div class="cell" style="left:28.5px;width:490.0px;top:193.2px;text-align:center;font-size:9.4px;height:12px">BICS Cars</div>
<div class="cell" style="left:28.5px;width:490.0px;top:500.8px;text-align:center;font-size:9.4px;height:12px">Owner Cars</div>
<div class="cell" style="left:30.7px;width:62.199999999999996px;top:208.70px;height:12.4px;text-align:left;font-size:9.4px;">891JN5</div>
<div class="cell" style="left:95.7px;width:61.199999999999996px;top:208.70px;height:12.4px;text-align:left;font-size:9.4px;">Kia Rio</div>
<svg class="abs" style="left:189.95px;top:207.10px" width="11.3" height="11.3" viewBox="0 0 10 10"><rect x="0" y="0" width="10" height="10" rx="1.3" fill="#767676"/><path d="M1.8 5.2 L4 7.4 L8.3 2.8" fill="none" stroke="#fff" stroke-width="1.4"/></svg>
<div class="cell" style="left:235.7px;width:96.6px;top:208.70px;height:12.4px;text-align:right;font-size:9.4px;">8-Mar-2024</div>
<div class="cell" style="left:336.7px;width:116.39999999999999px;top:210.35px;height:11.6px;text-align:left;font-size:8.55px;">7034305109981777</div>
<svg class="abs" style="left:189.95px;top:221.65px" width="11.3" height="11.3" viewBox="0 0 10 10"><rect x="0.6" y="0.6" width="8.8" height="8.8" rx="1.2" fill="#fff" stroke="#7a7a7a" stroke-width="1.2"/></svg>
<div class="cell" style="left:30.7px;width:62.199999999999996px;top:238.05px;height:11.6px;text-align:left;font-size:8.55px;">Kia Picanto</div>
<div class="cell" style="left:95.7px;width:61.199999999999996px;top:238.05px;height:11.6px;text-align:left;font-size:8.55px;">451JT3</div>
<svg class="abs" style="left:189.95px;top:236.30px" width="11.3" height="11.3" viewBox="0 0 10 10"><rect x="0.6" y="0.6" width="8.8" height="8.8" rx="1.2" fill="#fff" stroke="#7a7a7a" stroke-width="1.2"/></svg>
<div class="cell" style="left:235.7px;width:96.6px;top:237.30px;height:12.4px;text-align:right;font-size:9.4px;">11-Apr-2024</div>
<div class="cell" style="left:336.7px;width:116.39999999999999px;top:238.95px;height:11.6px;text-align:left;font-size:8.55px;">7034305110261078</div>
<div class="cell" style="left:455.9px;width:62.00000000000001px;top:240.10px;height:9.9px;text-align:left;font-size:6.9px;text-decoration:underline;color:#333;">23350278844</div>
<div class="cell" style="left:30.7px;width:62.199999999999996px;top:251.90px;height:12.4px;text-align:left;font-size:9.4px;">270FN3</div>
<div class="cell" style="left:95.7px;width:61.199999999999996px;top:251.90px;height:12.4px;text-align:left;font-size:9.4px;">Kia Picanto</div>
<svg class="abs" style="left:189.95px;top:250.95px" width="11.3" height="11.3" viewBox="0 0 10 10"><rect x="0.6" y="0.6" width="8.8" height="8.8" rx="1.2" fill="#fff" stroke="#7a7a7a" stroke-width="1.2"/></svg>
<div class="cell" style="left:336.7px;width:116.39999999999999px;top:253.55px;height:11.6px;text-align:left;font-size:8.55px;">7034305105637761</div>
<div class="cell" style="left:30.7px;width:62.199999999999996px;top:266.55px;height:12.4px;text-align:left;font-size:9.4px;">411CZ7</div>
<div class="cell" style="left:95.7px;width:61.199999999999996px;top:266.55px;height:12.4px;text-align:left;font-size:9.4px;">MG3</div>
<svg class="abs" style="left:189.95px;top:265.57px" width="11.3" height="11.3" viewBox="0 0 10 10"><rect x="0" y="0" width="10" height="10" rx="1.3" fill="#767676"/><path d="M1.8 5.2 L4 7.4 L8.3 2.8" fill="none" stroke="#fff" stroke-width="1.4"/></svg>
<div class="cell" style="left:235.7px;width:96.6px;top:266.55px;height:12.4px;text-align:right;font-size:9.4px;">27-Jun-2023</div>
<div class="cell" style="left:336.7px;width:116.39999999999999px;top:268.20px;height:11.6px;text-align:left;font-size:8.55px;">7034305103950364</div>
<div class="cell" style="left:30.7px;width:62.199999999999996px;top:281.20px;height:12.4px;text-align:left;font-size:9.4px;">019BO3</div>
<div class="cell" style="left:95.7px;width:61.199999999999996px;top:281.20px;height:12.4px;text-align:left;font-size:9.4px;">Honda Jazz</div>
<svg class="abs" style="left:189.95px;top:280.22px" width="11.3" height="11.3" viewBox="0 0 10 10"><rect x="0" y="0" width="10" height="10" rx="1.3" fill="#767676"/><path d="M1.8 5.2 L4 7.4 L8.3 2.8" fill="none" stroke="#fff" stroke-width="1.4"/></svg>
<div class="cell" style="left:235.7px;width:96.6px;top:281.20px;height:12.4px;text-align:right;font-size:9.4px;">27-Jun-2023</div>
<div class="cell" style="left:336.7px;width:116.39999999999999px;top:282.85px;height:11.6px;text-align:left;font-size:8.55px;">7034305109346948</div>
<div class="cell" style="left:30.7px;width:62.199999999999996px;top:295.85px;height:12.4px;text-align:left;font-size:9.4px;">071ZKJ</div>
<div class="cell" style="left:95.7px;width:61.199999999999996px;top:295.85px;height:12.4px;text-align:left;font-size:9.4px;">Honda Jazz</div>
<svg class="abs" style="left:189.95px;top:294.88px" width="11.3" height="11.3" viewBox="0 0 10 10"><rect x="0" y="0" width="10" height="10" rx="1.3" fill="#767676"/><path d="M1.8 5.2 L4 7.4 L8.3 2.8" fill="none" stroke="#fff" stroke-width="1.4"/></svg>
<div class="cell" style="left:235.7px;width:96.6px;top:295.85px;height:12.4px;text-align:right;font-size:9.4px;">27-Jun-2023</div>
<div class="cell" style="left:336.7px;width:116.39999999999999px;top:297.50px;height:11.6px;text-align:left;font-size:8.55px;">7034305107165647</div>
<div class="cell" style="left:30.7px;width:62.199999999999996px;top:310.50px;height:12.4px;text-align:left;font-size:9.4px;">797CO5</div>
<div class="cell" style="left:95.7px;width:61.199999999999996px;top:310.50px;height:12.4px;text-align:left;font-size:9.4px;">Honda Jazz</div>
<svg class="abs" style="left:189.95px;top:309.53px" width="11.3" height="11.3" viewBox="0 0 10 10"><rect x="0" y="0" width="10" height="10" rx="1.3" fill="#767676"/><path d="M1.8 5.2 L4 7.4 L8.3 2.8" fill="none" stroke="#fff" stroke-width="1.4"/></svg>
<div class="cell" style="left:235.7px;width:96.6px;top:310.50px;height:12.4px;text-align:right;font-size:9.4px;">27-Jun-2023</div>
<div class="cell" style="left:336.7px;width:116.39999999999999px;top:312.15px;height:11.6px;text-align:left;font-size:8.55px;">7034305106559394</div>
<div class="cell" style="left:30.7px;width:62.199999999999996px;top:325.15px;height:12.4px;text-align:left;font-size:9.4px;">692EA2</div>
<div class="cell" style="left:95.7px;width:61.199999999999996px;top:325.15px;height:12.4px;text-align:left;font-size:9.4px;">Kia Picanto</div>
<svg class="abs" style="left:189.95px;top:324.18px" width="11.3" height="11.3" viewBox="0 0 10 10"><rect x="0" y="0" width="10" height="10" rx="1.3" fill="#767676"/><path d="M1.8 5.2 L4 7.4 L8.3 2.8" fill="none" stroke="#fff" stroke-width="1.4"/></svg>
<div class="cell" style="left:235.7px;width:96.6px;top:325.15px;height:12.4px;text-align:right;font-size:9.4px;">27-Jun-2023</div>
<div class="cell" style="left:336.7px;width:116.39999999999999px;top:326.80px;height:11.6px;text-align:left;font-size:8.55px;">7034305103460315</div>
<div class="cell" style="left:30.7px;width:62.199999999999996px;top:339.80px;height:12.4px;text-align:left;font-size:9.4px;">313BQ4</div>
<div class="cell" style="left:95.7px;width:61.199999999999996px;top:339.80px;height:12.4px;text-align:left;font-size:9.4px;">Kia Picanto</div>
<svg class="abs" style="left:189.95px;top:338.82px" width="11.3" height="11.3" viewBox="0 0 10 10"><rect x="0" y="0" width="10" height="10" rx="1.3" fill="#767676"/><path d="M1.8 5.2 L4 7.4 L8.3 2.8" fill="none" stroke="#fff" stroke-width="1.4"/></svg>
<div class="cell" style="left:235.7px;width:96.6px;top:339.80px;height:12.4px;text-align:right;font-size:9.4px;">11-Apr-2024</div>
<div class="cell" style="left:336.7px;width:116.39999999999999px;top:341.45px;height:11.6px;text-align:left;font-size:8.55px;">7034305110218276</div>
<div class="cell" style="left:30.7px;width:62.199999999999996px;top:354.45px;height:12.4px;text-align:left;font-size:9.4px;">346GU6</div>
<div class="cell" style="left:95.7px;width:61.199999999999996px;top:354.45px;height:12.4px;text-align:left;font-size:9.4px;">Honda Jazz</div>
<svg class="abs" style="left:189.95px;top:353.48px" width="11.3" height="11.3" viewBox="0 0 10 10"><rect x="0" y="0" width="10" height="10" rx="1.3" fill="#767676"/><path d="M1.8 5.2 L4 7.4 L8.3 2.8" fill="none" stroke="#fff" stroke-width="1.4"/></svg>
<div class="cell" style="left:235.7px;width:96.6px;top:354.45px;height:12.4px;text-align:right;font-size:9.4px;">27-Jun-2023</div>
<div class="cell" style="left:336.7px;width:116.39999999999999px;top:356.10px;height:11.6px;text-align:left;font-size:8.55px;">7034305107612945</div>
<div class="cell" style="left:30.7px;width:62.199999999999996px;top:369.10px;height:12.4px;text-align:left;font-size:9.4px;">757GQ4</div>
<div class="cell" style="left:95.7px;width:61.199999999999996px;top:369.10px;height:12.4px;text-align:left;font-size:9.4px;">Kia Picanto</div>
<svg class="abs" style="left:189.95px;top:368.12px" width="11.3" height="11.3" viewBox="0 0 10 10"><rect x="0" y="0" width="10" height="10" rx="1.3" fill="#767676"/><path d="M1.8 5.2 L4 7.4 L8.3 2.8" fill="none" stroke="#fff" stroke-width="1.4"/></svg>
<div class="cell" style="left:235.7px;width:96.6px;top:369.10px;height:12.4px;text-align:right;font-size:9.4px;">27-Jun-2023</div>
<div class="cell" style="left:336.7px;width:116.39999999999999px;top:370.75px;height:11.6px;text-align:left;font-size:8.55px;">7034305106693649</div>
<div class="cell" style="left:30.7px;width:62.199999999999996px;top:383.75px;height:12.4px;text-align:left;font-size:9.4px;">774HQ6</div>
<div class="cell" style="left:95.7px;width:61.199999999999996px;top:383.75px;height:12.4px;text-align:left;font-size:9.4px;">Kia Picanto</div>
<svg class="abs" style="left:189.95px;top:382.77px" width="11.3" height="11.3" viewBox="0 0 10 10"><rect x="0" y="0" width="10" height="10" rx="1.3" fill="#767676"/><path d="M1.8 5.2 L4 7.4 L8.3 2.8" fill="none" stroke="#fff" stroke-width="1.4"/></svg>
<div class="cell" style="left:235.7px;width:96.6px;top:383.75px;height:12.4px;text-align:right;font-size:9.4px;">8-Sep-2023</div>
<div class="cell" style="left:336.7px;width:116.39999999999999px;top:385.40px;height:11.6px;text-align:left;font-size:8.55px;">7034305108022714</div>
<div class="cell" style="left:30.7px;width:62.199999999999996px;top:398.40px;height:12.4px;text-align:left;font-size:9.4px;">442CQ6</div>
<div class="cell" style="left:95.7px;width:61.199999999999996px;top:398.40px;height:12.4px;text-align:left;font-size:9.4px;">Holden Trax</div>
<svg class="abs" style="left:189.95px;top:397.43px" width="11.3" height="11.3" viewBox="0 0 10 10"><rect x="0" y="0" width="10" height="10" rx="1.3" fill="#767676"/><path d="M1.8 5.2 L4 7.4 L8.3 2.8" fill="none" stroke="#fff" stroke-width="1.4"/></svg>
<div class="cell" style="left:235.7px;width:96.6px;top:398.40px;height:12.4px;text-align:right;font-size:9.4px;">8-Sep-2023</div>
<div class="cell" style="left:336.7px;width:116.39999999999999px;top:400.05px;height:11.6px;text-align:left;font-size:8.55px;">7034305103459721</div>
<div class="cell" style="left:30.7px;width:62.199999999999996px;top:413.05px;height:12.4px;text-align:left;font-size:9.4px;">522EH2</div>
<div class="cell" style="left:95.7px;width:61.199999999999996px;top:413.05px;height:12.4px;text-align:left;font-size:9.4px;">Hyundai Kona</div>
<svg class="abs" style="left:189.95px;top:412.07px" width="11.3" height="11.3" viewBox="0 0 10 10"><rect x="0" y="0" width="10" height="10" rx="1.3" fill="#767676"/><path d="M1.8 5.2 L4 7.4 L8.3 2.8" fill="none" stroke="#fff" stroke-width="1.4"/></svg>
<div class="cell" style="left:235.7px;width:96.6px;top:413.05px;height:12.4px;text-align:right;font-size:9.4px;">6-Jul-2023</div>
<div class="cell" style="left:336.7px;width:116.39999999999999px;top:414.70px;height:11.6px;text-align:left;font-size:8.55px;">7034305107693416</div>
<div class="cell" style="left:30.7px;width:62.199999999999996px;top:427.70px;height:12.4px;text-align:left;font-size:9.4px;">076EY7</div>
<div class="cell" style="left:95.7px;width:61.199999999999996px;top:427.70px;height:12.4px;text-align:left;font-size:9.4px;">Honda Accord</div>
<svg class="abs" style="left:189.95px;top:426.73px" width="11.3" height="11.3" viewBox="0 0 10 10"><rect x="0" y="0" width="10" height="10" rx="1.3" fill="#767676"/><path d="M1.8 5.2 L4 7.4 L8.3 2.8" fill="none" stroke="#fff" stroke-width="1.4"/></svg>
<div class="cell" style="left:235.7px;width:96.6px;top:427.70px;height:12.4px;text-align:right;font-size:9.4px;">8-Sep-2023</div>
<div class="cell" style="left:336.7px;width:116.39999999999999px;top:429.35px;height:11.6px;text-align:left;font-size:8.55px;">7034305108304328</div>
<div class="cell" style="left:30.7px;width:62.199999999999996px;top:442.35px;height:12.4px;text-align:left;font-size:9.4px;">075AL4</div>
<div class="cell" style="left:95.7px;width:61.199999999999996px;top:442.35px;height:12.4px;text-align:left;font-size:9.4px;">Holden Captiva</div>
<svg class="abs" style="left:189.95px;top:441.38px" width="11.3" height="11.3" viewBox="0 0 10 10"><rect x="0" y="0" width="10" height="10" rx="1.3" fill="#767676"/><path d="M1.8 5.2 L4 7.4 L8.3 2.8" fill="none" stroke="#fff" stroke-width="1.4"/></svg>
<div class="cell" style="left:235.7px;width:96.6px;top:442.35px;height:12.4px;text-align:right;font-size:9.4px;">6-Jul-2023</div>
<div class="cell" style="left:336.7px;width:116.39999999999999px;top:444.00px;height:11.6px;text-align:left;font-size:8.55px;">7034305109420123</div>
<div class="cell" style="left:30.7px;width:62.199999999999996px;top:457.00px;height:12.4px;text-align:left;font-size:9.4px;">926IZ2</div>
<div class="cell" style="left:95.7px;width:61.199999999999996px;top:457.00px;height:12.4px;text-align:left;font-size:9.4px;">Kia Rio</div>
<svg class="abs" style="left:189.95px;top:456.02px" width="11.3" height="11.3" viewBox="0 0 10 10"><rect x="0" y="0" width="10" height="10" rx="1.3" fill="#767676"/><path d="M1.8 5.2 L4 7.4 L8.3 2.8" fill="none" stroke="#fff" stroke-width="1.4"/></svg>
<div class="cell" style="left:235.7px;width:96.6px;top:457.00px;height:12.4px;text-align:right;font-size:9.4px;">22-Dec-2023</div>
<div class="cell" style="left:336.7px;width:116.39999999999999px;top:458.65px;height:11.6px;text-align:left;font-size:8.55px;">7034305109347235</div>
<div class="cell" style="left:455.9px;width:60.00000000000001px;top:458.65px;height:11.6px;text-align:right;font-size:8.55px;">2335027844</div>
<div class="cell" style="left:30.7px;width:62.199999999999996px;top:471.65px;height:12.4px;text-align:left;font-size:9.4px;">927IZ2</div>
<div class="cell" style="left:95.7px;width:61.199999999999996px;top:471.65px;height:12.4px;text-align:left;font-size:9.4px;">Kia Stonic</div>
<svg class="abs" style="left:189.95px;top:470.68px" width="11.3" height="11.3" viewBox="0 0 10 10"><rect x="0" y="0" width="10" height="10" rx="1.3" fill="#767676"/><path d="M1.8 5.2 L4 7.4 L8.3 2.8" fill="none" stroke="#fff" stroke-width="1.4"/></svg>
<div class="cell" style="left:235.7px;width:96.6px;top:471.65px;height:12.4px;text-align:right;font-size:9.4px;">22-Dec-2023</div>
<div class="cell" style="left:336.7px;width:116.39999999999999px;top:473.30px;height:11.6px;text-align:left;font-size:8.55px;">7034305109347219</div>
<div class="cell" style="left:455.9px;width:60.00000000000001px;top:473.30px;height:11.6px;text-align:right;font-size:8.55px;">23350278885</div>
<div class="cell" style="left:30.7px;width:62.199999999999996px;top:486.30px;height:12.4px;text-align:left;font-size:9.4px;">964IZ2</div>
<div class="cell" style="left:95.7px;width:61.199999999999996px;top:486.30px;height:12.4px;text-align:left;font-size:9.4px;">VW T-Cross</div>
<svg class="abs" style="left:189.95px;top:485.32px" width="11.3" height="11.3" viewBox="0 0 10 10"><rect x="0" y="0" width="10" height="10" rx="1.3" fill="#767676"/><path d="M1.8 5.2 L4 7.4 L8.3 2.8" fill="none" stroke="#fff" stroke-width="1.4"/></svg>
<div class="cell" style="left:235.7px;width:96.6px;top:486.30px;height:12.4px;text-align:right;font-size:9.4px;">8-Sep-2023</div>
<div class="cell" style="left:455.9px;width:60.00000000000001px;top:487.95px;height:11.6px;text-align:right;font-size:8.55px;">23350278927</div>
<div class="cell" style="left:30.7px;width:62.199999999999996px;top:515.60px;height:12.4px;text-align:left;font-size:9.4px;">389ZVZ</div>
<div class="cell" style="left:95.7px;width:61.199999999999996px;top:515.60px;height:12.4px;text-align:left;font-size:9.4px;">Kia Cerato</div>
<svg class="abs" style="left:189.95px;top:514.63px" width="11.3" height="11.3" viewBox="0 0 10 10"><rect x="0.6" y="0.6" width="8.8" height="8.8" rx="1.2" fill="#fff" stroke="#7a7a7a" stroke-width="1.2"/></svg>
<div class="cell" style="left:30.7px;width:62.199999999999996px;top:530.25px;height:12.4px;text-align:left;font-size:9.4px;">815JB6</div>
<div class="cell" style="left:95.7px;width:61.199999999999996px;top:530.25px;height:12.4px;text-align:left;font-size:9.4px;">Mazda 3</div>
<svg class="abs" style="left:189.95px;top:529.27px" width="11.3" height="11.3" viewBox="0 0 10 10"><rect x="0" y="0" width="10" height="10" rx="1.3" fill="#767676"/><path d="M1.8 5.2 L4 7.4 L8.3 2.8" fill="none" stroke="#fff" stroke-width="1.4"/></svg>
<div class="cell" style="left:235.7px;width:96.6px;top:530.25px;height:12.4px;text-align:right;font-size:9.4px;">13-Mar-2024</div>
<div class="cell" style="left:336.7px;width:116.39999999999999px;top:530.25px;height:12.4px;text-align:left;font-size:9.4px;">7034305110012562</div>
<div class="cell" style="left:30.7px;width:62.199999999999996px;top:544.90px;height:12.4px;text-align:left;font-size:9.4px;">106XGQ</div>
<div class="cell" style="left:95.7px;width:61.199999999999996px;top:544.90px;height:12.4px;text-align:left;font-size:9.4px;">Subaru XV</div>
<svg class="abs" style="left:189.95px;top:543.93px" width="11.3" height="11.3" viewBox="0 0 10 10"><rect x="0" y="0" width="10" height="10" rx="1.3" fill="#767676"/><path d="M1.8 5.2 L4 7.4 L8.3 2.8" fill="none" stroke="#fff" stroke-width="1.4"/></svg>
<div class="cell" style="left:235.7px;width:96.6px;top:544.90px;height:12.4px;text-align:right;font-size:9.4px;">13-Mar-2024</div>
<div class="cell" style="left:336.7px;width:116.39999999999999px;top:544.90px;height:12.4px;text-align:left;font-size:9.4px;">7034305110012091</div>
<div class="cell" style="left:30.7px;width:62.199999999999996px;top:559.55px;height:12.4px;text-align:left;font-size:9.4px;">995YCI</div>
<div class="cell" style="left:95.7px;width:61.199999999999996px;top:559.55px;height:12.4px;text-align:left;font-size:9.4px;">Subaru XV</div>
<svg class="abs" style="left:189.95px;top:558.58px" width="11.3" height="11.3" viewBox="0 0 10 10"><rect x="0" y="0" width="10" height="10" rx="1.3" fill="#767676"/><path d="M1.8 5.2 L4 7.4 L8.3 2.8" fill="none" stroke="#fff" stroke-width="1.4"/></svg>
<div class="cell" style="left:235.7px;width:96.6px;top:559.55px;height:12.4px;text-align:right;font-size:9.4px;">28-Jun-2023</div>
<div class="cell" style="left:336.7px;width:116.39999999999999px;top:561.20px;height:11.6px;text-align:left;font-size:8.55px;">7034305107588731</div>
<div class="cell" style="left:30.7px;width:62.199999999999996px;top:574.20px;height:12.4px;text-align:left;font-size:9.4px;">725ZCI</div>
<div class="cell" style="left:95.7px;width:61.199999999999996px;top:574.20px;height:12.4px;text-align:left;font-size:9.4px;">Hyundai Kona</div>
<svg class="abs" style="left:189.95px;top:573.23px" width="11.3" height="11.3" viewBox="0 0 10 10"><rect x="0" y="0" width="10" height="10" rx="1.3" fill="#767676"/><path d="M1.8 5.2 L4 7.4 L8.3 2.8" fill="none" stroke="#fff" stroke-width="1.4"/></svg>
<div class="cell" style="left:235.7px;width:96.6px;top:574.20px;height:12.4px;text-align:right;font-size:9.4px;">28-Jun-2023</div>
<div class="cell" style="left:336.7px;width:116.39999999999999px;top:575.85px;height:11.6px;text-align:left;font-size:8.55px;">7034305107587345</div>
<div class="cell" style="left:30.7px;width:62.199999999999996px;top:588.85px;height:12.4px;text-align:left;font-size:9.4px;">168FB5</div>
<div class="cell" style="left:95.7px;width:61.199999999999996px;top:588.85px;height:12.4px;text-align:left;font-size:9.4px;">Mazda CX-5</div>
<svg class="abs" style="left:189.95px;top:587.88px" width="11.3" height="11.3" viewBox="0 0 10 10"><rect x="0.6" y="0.6" width="8.8" height="8.8" rx="1.2" fill="#fff" stroke="#7a7a7a" stroke-width="1.2"/></svg>
<div class="cell" style="left:235.7px;width:96.6px;top:588.85px;height:12.4px;text-align:right;font-size:9.4px;">11-Jun-2023</div>
<div class="cell" style="left:336.7px;width:116.39999999999999px;top:590.50px;height:11.6px;text-align:left;font-size:8.55px;">7034305108840594</div>
<div class="cell" style="left:30.7px;width:62.199999999999996px;top:603.50px;height:12.4px;text-align:left;font-size:9.4px;">448CL8</div>
<div class="cell" style="left:95.7px;width:61.199999999999996px;top:603.50px;height:12.4px;text-align:left;font-size:9.4px;">Kia Rio</div>
<svg class="abs" style="left:189.95px;top:602.52px" width="11.3" height="11.3" viewBox="0 0 10 10"><rect x="0" y="0" width="10" height="10" rx="1.3" fill="#767676"/><path d="M1.8 5.2 L4 7.4 L8.3 2.8" fill="none" stroke="#fff" stroke-width="1.4"/></svg>
<div class="cell" style="left:235.7px;width:96.6px;top:603.50px;height:12.4px;text-align:right;font-size:9.4px;">28-Jun-2023</div>
<div class="cell" style="left:336.7px;width:116.39999999999999px;top:605.15px;height:11.6px;text-align:left;font-size:8.55px;">7034305107588814</div>
<svg class="abs" style="left:189.95px;top:617.18px" width="11.3" height="11.3" viewBox="0 0 10 10"><rect x="0.6" y="0.6" width="8.8" height="8.8" rx="1.2" fill="#fff" stroke="#7a7a7a" stroke-width="1.2"/></svg>
<div class="cell" style="left:336.7px;width:116.39999999999999px;top:619.80px;height:11.6px;text-align:left;font-size:8.55px;">7034305107588277</div>
<div class="cell" style="left:30.7px;width:62.199999999999996px;top:632.80px;height:12.4px;text-align:left;font-size:9.4px;">512HK3</div>
<div class="cell" style="left:95.7px;width:61.199999999999996px;top:632.80px;height:12.4px;text-align:left;font-size:9.4px;">Kia Cerato</div>
<svg class="abs" style="left:189.95px;top:631.83px" width="11.3" height="11.3" viewBox="0 0 10 10"><rect x="0" y="0" width="10" height="10" rx="1.3" fill="#767676"/><path d="M1.8 5.2 L4 7.4 L8.3 2.8" fill="none" stroke="#fff" stroke-width="1.4"/></svg>
<div class="cell" style="left:235.7px;width:96.6px;top:632.80px;height:12.4px;text-align:right;font-size:9.4px;">1-Aug-2023</div>
<div class="cell" style="left:336.7px;width:116.39999999999999px;top:634.45px;height:11.6px;text-align:left;font-size:8.55px;">7034305107903922</div>
<div class="cell" style="left:30.7px;width:62.199999999999996px;top:647.45px;height:12.4px;text-align:left;font-size:9.4px;">607DM2</div>
<div class="cell" style="left:95.7px;width:61.199999999999996px;top:647.45px;height:12.4px;text-align:left;font-size:9.4px;">Mazda 3</div>
<svg class="abs" style="left:189.95px;top:646.48px" width="11.3" height="11.3" viewBox="0 0 10 10"><rect x="0" y="0" width="10" height="10" rx="1.3" fill="#767676"/><path d="M1.8 5.2 L4 7.4 L8.3 2.8" fill="none" stroke="#fff" stroke-width="1.4"/></svg>
<div class="cell" style="left:235.7px;width:96.6px;top:648.20px;height:11.6px;text-align:right;font-size:8.55px;">11-Jan-2024</div>
<div class="cell" style="left:336.7px;width:116.39999999999999px;top:649.10px;height:11.6px;text-align:left;font-size:8.55px;">7034305108224799</div>
<div class="cell" style="left:30.7px;width:62.199999999999996px;top:662.10px;height:12.4px;text-align:left;font-size:9.4px;">733BX9</div>
<div class="cell" style="left:95.7px;width:61.199999999999996px;top:662.10px;height:12.4px;text-align:left;font-size:9.4px;">Suzuki Ignis</div>
<svg class="abs" style="left:189.95px;top:661.13px" width="11.3" height="11.3" viewBox="0 0 10 10"><rect x="0" y="0" width="10" height="10" rx="1.3" fill="#767676"/><path d="M1.8 5.2 L4 7.4 L8.3 2.8" fill="none" stroke="#fff" stroke-width="1.4"/></svg>
<div class="cell" style="left:235.7px;width:96.6px;top:662.10px;height:12.4px;text-align:right;font-size:9.4px;">28-Jun-2023</div>
<div class="cell" style="left:336.7px;width:116.39999999999999px;top:663.75px;height:11.6px;text-align:left;font-size:8.55px;">7034305107588715</div>
<div class="cell" style="left:30.7px;width:62.199999999999996px;top:676.75px;height:12.4px;text-align:left;font-size:9.4px;">284EV6</div>
<div class="cell" style="left:95.7px;width:61.199999999999996px;top:676.75px;height:12.4px;text-align:left;font-size:9.4px;">Holden Trax</div>
<svg class="abs" style="left:189.95px;top:675.77px" width="11.3" height="11.3" viewBox="0 0 10 10"><rect x="0" y="0" width="10" height="10" rx="1.3" fill="#767676"/><path d="M1.8 5.2 L4 7.4 L8.3 2.8" fill="none" stroke="#fff" stroke-width="1.4"/></svg>
<div class="cell" style="left:235.7px;width:96.6px;top:676.75px;height:12.4px;text-align:right;font-size:9.4px;">8-Sep-2023</div>
<div class="cell" style="left:336.7px;width:116.39999999999999px;top:678.40px;height:11.6px;text-align:left;font-size:8.55px;">7034305108428036</div>
<div class="cell" style="left:682.3px;width:443.20000000000005px;top:208.9px;height:13px;text-align:center;font-size:10.2px;font-weight:bold;color:#111">Fleetcard Login Details.</div>
<div class="cell" style="left:686.5px;top:224.70000000000002px;font-size:8.55px;height:12px">Website</div>
<div class="cell" style="left:901.7px;top:224.70000000000002px;font-size:8.55px;height:12px;color:#1155cc;text-decoration:underline;">fleetcard.com.au</div>
<div class="cell" style="left:686.5px;top:239.3px;font-size:8.55px;height:12px">Username</div>
<div class="cell" style="left:901.7px;top:239.3px;font-size:8.55px;height:12px;">Bayislandscarshare</div>
<div class="cell" style="left:686.5px;top:254.0px;font-size:8.55px;height:12px">Password</div>
<div class="cell" style="left:901.7px;top:254.0px;font-size:8.55px;height:12px;">Qg48Rzi1A6Lty7FPq3a2XYk50Ejo9B9Tcf6</div>
<div class="abs" style="left:898.8000000000001px;top:365.95px;width:227.19999999999996px;height:15.35px;border:1.15px solid #3f6fc6"></div>
<div class="abs" style="left:1122.7px;top:377.99999999999994px;width:6.2px;height:6.2px;border-radius:50%;background:#1a56c4;border:0.5px solid #fff"></div>
<div class="abs" style="left:1334.5px;top:160px;width:5.5px;height:537.3px;background:#fff"></div>
<div class="abs" style="left:1334.5px;top:160px;width:5.5px;height:14.5px;background:#f3f4f5"></div>
<div class="abs" style="left:1335.2px;top:176px;width:4.8px;height:16.5px;border-radius:2.4px 0 0 2.4px;background:#dadce0"></div>
<div class="abs" style="left:0;top:688.3px;width:1340px;height:9px;background:#fbfbfb;border-top:1px solid #e4e4e4"></div>
<div class="abs" style="left:0;top:690.5px;width:818.5px;height:5px;border-radius:0 2.5px 2.5px 0;background:#dadce0"></div>
<div class="abs" style="left:1315.5px;top:689.3px;width:19px;height:8px;background:#f1f1f1;border-left:1px solid #e2e2e2;border-right:1px solid #e2e2e2"></div>
<div class="abs" style="left:1318.5px;top:691.7px;width:0;height:0;border-top:1.7px solid transparent;border-bottom:1.7px solid transparent;border-right:2.4px solid #b0b0b0"></div>
<div class="abs" style="left:1328.5px;top:691.7px;width:0;height:0;border-top:1.7px solid transparent;border-bottom:1.7px solid transparent;border-left:2.4px solid #b0b0b0"></div>
<div class="abs" style="left:1334.5px;top:670px;width:5.5px;height:18.3px;background:#f4f4f4;border-top:1px solid #e2e2e2"></div>
<div class="abs" style="left:1334.5px;top:679.3px;width:5.5px;height:1px;background:#e2e2e2"></div>
<div class="abs" style="left:1337px;top:675px;width:3px;height:1.2px;background:#9a9a9a"></div><div class="abs" style="left:1337px;top:685px;width:3px;height:1.2px;background:#9a9a9a"></div>
<div class="abs" style="left:0;top:697.2px;width:1340px;height:22.8px;background:#f8fafd;border-top:1px solid #eceef1"></div>
<div class="abs" style="left:168.5px;top:697.6px;width:105.5px;height:22.4px;background:#e1e9f7"></div>
<svg class="abs" style="left:35.3px;top:706.3px" width="8" height="8" viewBox="0 0 8 8"><path d="M4 0.3 V7.7 M0.3 4 H7.7" stroke="#444746" stroke-width="1"/></svg>
<div class="st" style="left:93.2px;color:#4d5156;letter-spacing:0.038px">Task Tracker</div>
<svg class="abs" style="left:155.7px;top:708.6px" width="5" height="2.9" viewBox="0 0 10 5.8"><path d="M0 0 H10 L5 5.8 Z" fill="#4d5156"/></svg>
<div class="st" style="left:177.5px;color:#0b57d0;letter-spacing:0.242px">Fuel Card Details</div>
<svg class="abs" style="left:261.5px;top:708.6px" width="5" height="2.9" viewBox="0 0 10 5.8"><path d="M0 0 H10 L5 5.8 Z" fill="#0b57d0"/></svg>
<div class="st" style="left:282px;color:#4d5156;letter-spacing:0.276px">Registration</div>
<svg class="abs" style="left:343.5px;top:708.6px" width="5" height="2.9" viewBox="0 0 10 5.8"><path d="M0 0 H10 L5 5.8 Z" fill="#4d5156"/></svg>
<div class="st" style="left:364.5px;color:#4d5156;letter-spacing:0.280px">Lock Battery install dates</div>
<svg class="abs" style="left:484.5px;top:708.6px" width="5" height="2.9" viewBox="0 0 10 5.8"><path d="M0 0 H10 L5 5.8 Z" fill="#4d5156"/></svg>
<div class="st" style="left:505.9px;color:#4d5156;letter-spacing:0.236px">Air freshener replacement</div>
<svg class="abs" style="left:628.8px;top:708.6px" width="5" height="2.9" viewBox="0 0 10 5.8"><path d="M0 0 H10 L5 5.8 Z" fill="#4d5156"/></svg>
<div class="st" style="left:649.7px;color:#4d5156;letter-spacing:0.199px">Monthly Points Tracker</div>
<svg class="abs" style="left:760.5px;top:708.6px" width="5" height="2.9" viewBox="0 0 10 5.8"><path d="M0 0 H10 L5 5.8 Z" fill="#4d5156"/></svg>
<div class="st" style="left:782px;color:#4d5156;letter-spacing:0.244px">stickers, chargers, etc</div>
<svg class="abs" style="left:887.7px;top:708.6px" width="5" height="2.9" viewBox="0 0 10 5.8"><path d="M0 0 H10 L5 5.8 Z" fill="#4d5156"/></svg>
<div class="st" style="left:908.6px;color:#4d5156;letter-spacing:-0.142px">Sheet17</div>
<svg class="abs" style="left:950.2px;top:708.6px" width="5" height="2.9" viewBox="0 0 10 5.8"><path d="M0 0 H10 L5 5.8 Z" fill="#4d5156"/></svg>
<div class="st" style="left:971.6px;color:#4d5156;letter-spacing:0.162px">How I made this sheet</div>
<svg class="abs" style="left:1076.3px;top:708.6px" width="5" height="2.9" viewBox="0 0 10 5.8"><path d="M0 0 H10 L5 5.8 Z" fill="#4d5156"/></svg>
<svg class="abs" style="left:1320.3px;top:706.6px" width="5" height="8" viewBox="0 0 5 8"><path d="M4.3 0.6 L1 4 L4.3 7.4" fill="none" stroke="#444746" stroke-width="1.2"/></svg>
<div class="abs" style="left:4.8px;top:574.3px;width:142px;height:142px;border-radius:50%;background:#f3f3f6;box-shadow:0 0.5px 3px rgba(0,0,0,0.15)"></div>
<svg class="abs" style="left:10px;top:579.5px" width="131.6" height="131.6" viewBox="0 0 131.6 131.6"><defs><clipPath id="avc"><circle cx="65.8" cy="65.8" r="65.8"/></clipPath></defs><circle cx="65.8" cy="65.8" r="65.8" fill="#b9b7c7"/><g clip-path="url(#avc)" fill="none" stroke="#f3f3f6" stroke-width="4.9"><circle cx="65.5" cy="48.3" r="27.5"/><circle cx="65.8" cy="149.9" r="64.4"/></g></svg>
<div class="abs" style="left:158px;top:677.8px;width:171px;height:31.6px;border-radius:15.8px;background:#1c1c1c;box-shadow:0 1px 3px rgba(0,0,0,.3)"></div>
<div class="abs" style="left:168px;top:683px;width:22.5px;height:22.5px;border-radius:50%;background:#ff623f"></div>
<div class="abs" style="left:174.5px;top:689.3px;width:9.6px;height:9.6px;border-radius:1.8px;background:#fff"></div>
<div class="abs" style="left:199px;top:689px;width:2.7px;height:10px;border-radius:1px;background:#fff"></div><div class="abs" style="left:204.3px;top:689px;width:2.7px;height:10px;border-radius:1px;background:#fff"></div>
<svg class="abs" style="left:219.5px;top:689.5px" width="13" height="9" viewBox="0 0 13 9"><path d="M6.3 0.3 V8.7 L0.3 4.5 Z M12.7 0.3 V8.7 L6.7 4.5 Z" fill="#fff"/></svg>
<div class="t" style="left:244px;top:688.9px;font-size:9.6px;color:#fff;font-weight:bold;letter-spacing:0.8px">5:00</div>
<div class="abs" style="left:273px;top:686px;width:1px;height:16px;background:#4a4a4a"></div>
<svg class="abs" style="left:282.5px;top:688.5px" width="11" height="11" viewBox="0 0 11 11"><path d="M1.6 5.8 A4 4 0 1 0 3 2.6" fill="none" stroke="#fff" stroke-width="1.1"/><path d="M1.2 1 V3.8 H4" fill="none" stroke="#fff" stroke-width="1.1"/></svg>
<svg class="abs" style="left:303px;top:688px" width="11" height="12" viewBox="0 0 11 12"><path d="M0.8 2.6 H10.2 M3.8 2.4 V0.8 H7.2 V2.4 M1.8 2.8 V10.2 Q1.8 11.2 2.8 11.2 H8.2 Q9.2 11.2 9.2 10.2 V2.8 M4.2 4.8 V9 M6.8 4.8 V9" fill="none" stroke="#fff" stroke-width="1.1"/></svg>
</div></body></html>
